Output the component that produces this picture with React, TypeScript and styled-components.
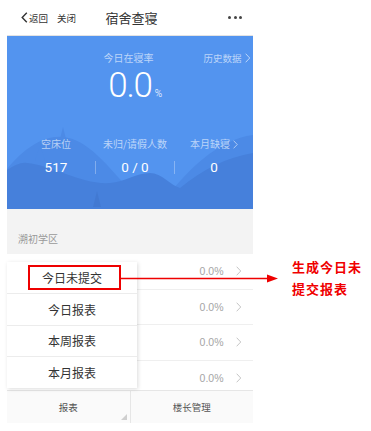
import React from 'react'
import styled, { createGlobalStyle } from 'styled-components'

const GlobalStyle = createGlobalStyle`
  html, body {
    margin: 0;
    padding: 0;
    background: #ffffff;
  }
  body {
    font-family: "Noto Sans CJK SC", "Noto Sans", sans-serif;
  }
`

const Page = styled.div`
  position: relative;
  width: 371px;
  height: 431px;
  overflow: hidden;
  background: #ffffff;
`

const Phone = styled.div`
  position: relative;
  margin-left: 7px;
  width: 246px;
  height: 423px;
  display: flex;
  flex-direction: column;
  background: #ffffff;
`

const NavBar = styled.div`
  height: 35px;
  flex-shrink: 0;
  display: grid;
  grid-template-columns: 1fr auto 1fr;
  align-items: center;
  padding: 0 11px 0 14px;
  border-bottom: 1px solid #e3e3e3;
  color: #333;
`

const NavLeft = styled.div`
  display: flex;
  align-items: center;
  font-size: 9.5px;
  gap: 9px;
`

const BackLink = styled.span`
  display: flex;
  align-items: center;
  gap: 1px;
`

const NavTitle = styled.div`
  font-size: 13px;
  color: #333;
`

const Dots = styled.div`
  justify-self: end;
  display: flex;
  gap: 2.5px;
  span {
    width: 3px;
    height: 3px;
    border-radius: 50%;
    background: #444;
  }
`

const Scroller = styled.div`
  flex: 1;
  overflow: hidden;
`

const Hero = styled.div`
  position: relative;
  height: 173px;
  box-sizing: border-box;
  padding-top: 15px;
  background: #5394ef;
  color: #fff;
  overflow: hidden;
`

const Hills = styled.svg`
  position: absolute;
  left: 0;
  bottom: 0;
`

const HeroTop = styled.div`
  position: relative;
  display: grid;
  grid-template-columns: 1fr auto 1fr;
  align-items: center;
  height: 14px;
  padding-right: 3px;
`

const HeroLabel = styled.div`
  grid-column: 2;
  font-size: 10px;
  line-height: 14px;
  color: rgba(255, 255, 255, 0.62);
`

const HeroLink = styled.div`
  justify-self: end;
  display: flex;
  align-items: center;
  gap: 3px;
  font-size: 9.5px;
  color: rgba(255, 255, 255, 0.62);
`

const BigValueRow = styled.div`
  position: relative;
  display: flex;
  justify-content: center;
  margin-top: 3px;
  height: 36px;
`

const BigValue = styled.div`
  position: relative;
  font-family: Roboto, "Noto Sans", sans-serif;
  font-weight: 300;
  font-size: 35px;
  line-height: 36px;
  letter-spacing: -1.3px;
`

const Percent = styled.span`
  position: absolute;
  left: 100%;
  bottom: 5px;
  margin-left: 3px;
  font-size: 10px;
  line-height: 10px;
  letter-spacing: 0;
`

const Stats = styled.div`
  position: relative;
  margin-top: 33px;
  padding-left: 10px;
  display: grid;
  grid-template-columns: 1fr 1px 1fr 1px 1fr;
  grid-template-rows: 14px 18px;
  row-gap: 7px;
  align-items: center;
`

const StatLabel = styled.div<{ $col: number }>`
  grid-column: ${p => p.$col};
  grid-row: 1;
  justify-self: center;
  display: flex;
  align-items: center;
  gap: 3px;
  font-size: 10px;
  line-height: 14px;
  color: rgba(255, 255, 255, 0.62);
`

const StatValue = styled.div<{ $col: number }>`
  grid-column: ${p => p.$col};
  grid-row: 2;
  justify-self: center;
  font-family: Roboto, "Noto Sans", sans-serif;
  font-size: 13.5px;
  line-height: 18px;
  color: #fff;
`

const StatDivider = styled.div<{ $col: number }>`
  grid-column: ${p => p.$col};
  grid-row: 2;
  height: 13px;
  background: rgba(255, 255, 255, 0.3);
`

const Section = styled.div`
  height: 45px;
  box-sizing: border-box;
  padding: 23px 0 0 11px;
  background: #f3f3f3;
  font-size: 10px;
  line-height: 14px;
  color: #999;
`

const Row = styled.div`
  height: 35.5px;
  box-sizing: border-box;
  display: flex;
  align-items: center;
  justify-content: flex-end;
  gap: 12px;
  padding-right: 12px;
  border-bottom: 1px solid #efefef;
  font-family: "Liberation Sans", Arial, sans-serif;
  font-size: 10.5px;
  color: #a5a5a5;
`

const TabBar = styled.div`
  height: 33px;
  flex-shrink: 0;
  display: flex;
  border-top: 1px solid #e6e6e6;
  box-sizing: border-box;
  background: #fafafa;
`

const Tab = styled.div<{ $menu?: boolean }>`
  position: relative;
  flex: 1;
  display: flex;
  align-items: center;
  justify-content: center;
  font-size: 9.5px;
  color: #555;
  & + & {
    border-left: 1px solid #e6e6e6;
  }
  ${p => p.$menu && `
    &::after {
      content: '';
      position: absolute;
      right: 3px;
      bottom: 3px;
      width: 0;
      height: 0;
      border-left: 6px solid transparent;
      border-bottom: 6px solid #cfcfcf;
    }
  `}
`

const Menu = styled.div`
  position: absolute;
  left: 0;
  bottom: 35px;
  width: 130px;
  background: #fff;
  box-shadow: 1px 1px 4px rgba(0, 0, 0, 0.14);
`

const MenuItem = styled.div`
  height: 30.75px;
  display: flex;
  align-items: center;
  justify-content: center;
  font-size: 12px;
  color: #333;
  & + & {
    border-top: 1px solid #ececec;
  }
`

const HighlightBox = styled.div`
  position: absolute;
  left: 28px;
  top: 265px;
  width: 93px;
  height: 25px;
  box-sizing: border-box;
  border: 2px solid #ee0000;
`

const Arrow = styled.svg`
  position: absolute;
  left: 121px;
  top: 272px;
`

const Note = styled.div`
  position: absolute;
  left: 292px;
  top: 256px;
  width: 76px;
  font-size: 13px;
  font-weight: bold;
  line-height: 22px;
  letter-spacing: 1px;
  color: #f00000;
`

const Chevron = ({ color = 'currentColor', h = 9 }: { color?: string; h?: number }) => (
  <svg width={h * 0.55} height={h} viewBox="0 0 5 9">
    <polyline points="0.6,0.6 4.3,4.5 0.6,8.4" fill="none" stroke={color} strokeWidth="0.9" />
  </svg>
)

const rows = ['0.0%', '0.0%', '0.0%', '0.0%']
const menuItems = ['今日未提交', '今日报表', '本周报表', '本月报表']

export default function App() {
  return (
    <Page>
      <GlobalStyle />
      <Phone>
        <NavBar>
          <NavLeft>
            <BackLink>
              <svg width="7" height="11" viewBox="0 0 7 11">
                <polyline points="5.8,0.8 1.2,5.5 5.8,10.2" fill="none" stroke="#333" strokeWidth="1.4" />
              </svg>
              返回
            </BackLink>
            <span>关闭</span>
          </NavLeft>
          <NavTitle>宿舍查寝</NavTitle>
          <Dots>
            <span />
            <span />
            <span />
          </Dots>
        </NavBar>
        <Scroller>
          <Hero>
            <Hills width="246" height="84" viewBox="0 0 246 84">
              <path d="M0,44 C18,22 38,10 56,12 C80,14 100,40 120,62 C132,72 142,80 152,84 L0,84 Z" fill="#4c8ae6" />
              <path d="M150,84 C180,44 212,14 246,10 L246,84 Z" fill="#4c8ae6" />
              <polygon points="56,2 51,22 61,22" fill="#4c8ae6" />
              <polygon points="33,20 28,36 38,36" fill="#4c8ae6" />
              <path d="M0,45 C8,40 14,37 20,38 C45,40 75,60 103,58 C118,57 128,48 143,48 C155,48 163,60 173,63 C195,45 220,32 246,28 L246,84 L0,84 Z" fill="#4680db" />
              <polygon points="90,66 86,82 94,82" fill="#4279d2" />
            </Hills>
            <HeroTop>
              <HeroLabel>今日在寝率</HeroLabel>
              <HeroLink>
                历史数据
                <Chevron h={10} />
              </HeroLink>
            </HeroTop>
            <BigValueRow>
              <BigValue>
                0.0
                <Percent>%</Percent>
              </BigValue>
            </BigValueRow>
            <Stats>
              <StatLabel $col={1}>空床位</StatLabel>
              <StatLabel $col={3}>未归/请假人数</StatLabel>
              <StatLabel $col={5}>
                本月缺寝
                <Chevron h={9} />
              </StatLabel>
              <StatValue $col={1}>517</StatValue>
              <StatDivider $col={2} />
              <StatValue $col={3}>0 / 0</StatValue>
              <StatDivider $col={4} />
              <StatValue $col={5}>0</StatValue>
            </Stats>
          </Hero>
          <Section>溯初学区</Section>
          {rows.map((r, i) => (
            <Row key={i}>
              <span>{r}</span>
              <Chevron color="#c4c4c4" h={10} />
            </Row>
          ))}
        </Scroller>
        <TabBar>
          <Tab $menu>报表</Tab>
          <Tab>楼长管理</Tab>
        </TabBar>
        <Menu>
          {menuItems.map(m => (
            <MenuItem key={m}>{m}</MenuItem>
          ))}
        </Menu>
      </Phone>
      <HighlightBox />
      <Arrow width="160" height="14" viewBox="0 0 160 14">
        <line x1="0" y1="6.5" x2="148" y2="6.5" stroke="#ee0000" strokeWidth="1.6" />
        <polygon points="146,2.5 157,6.5 146,10.5" fill="#ee0000" />
      </Arrow>
      <Note>
        生成今日未
        <br />
        提交报表
      </Note>
    </Page>
  )
}
